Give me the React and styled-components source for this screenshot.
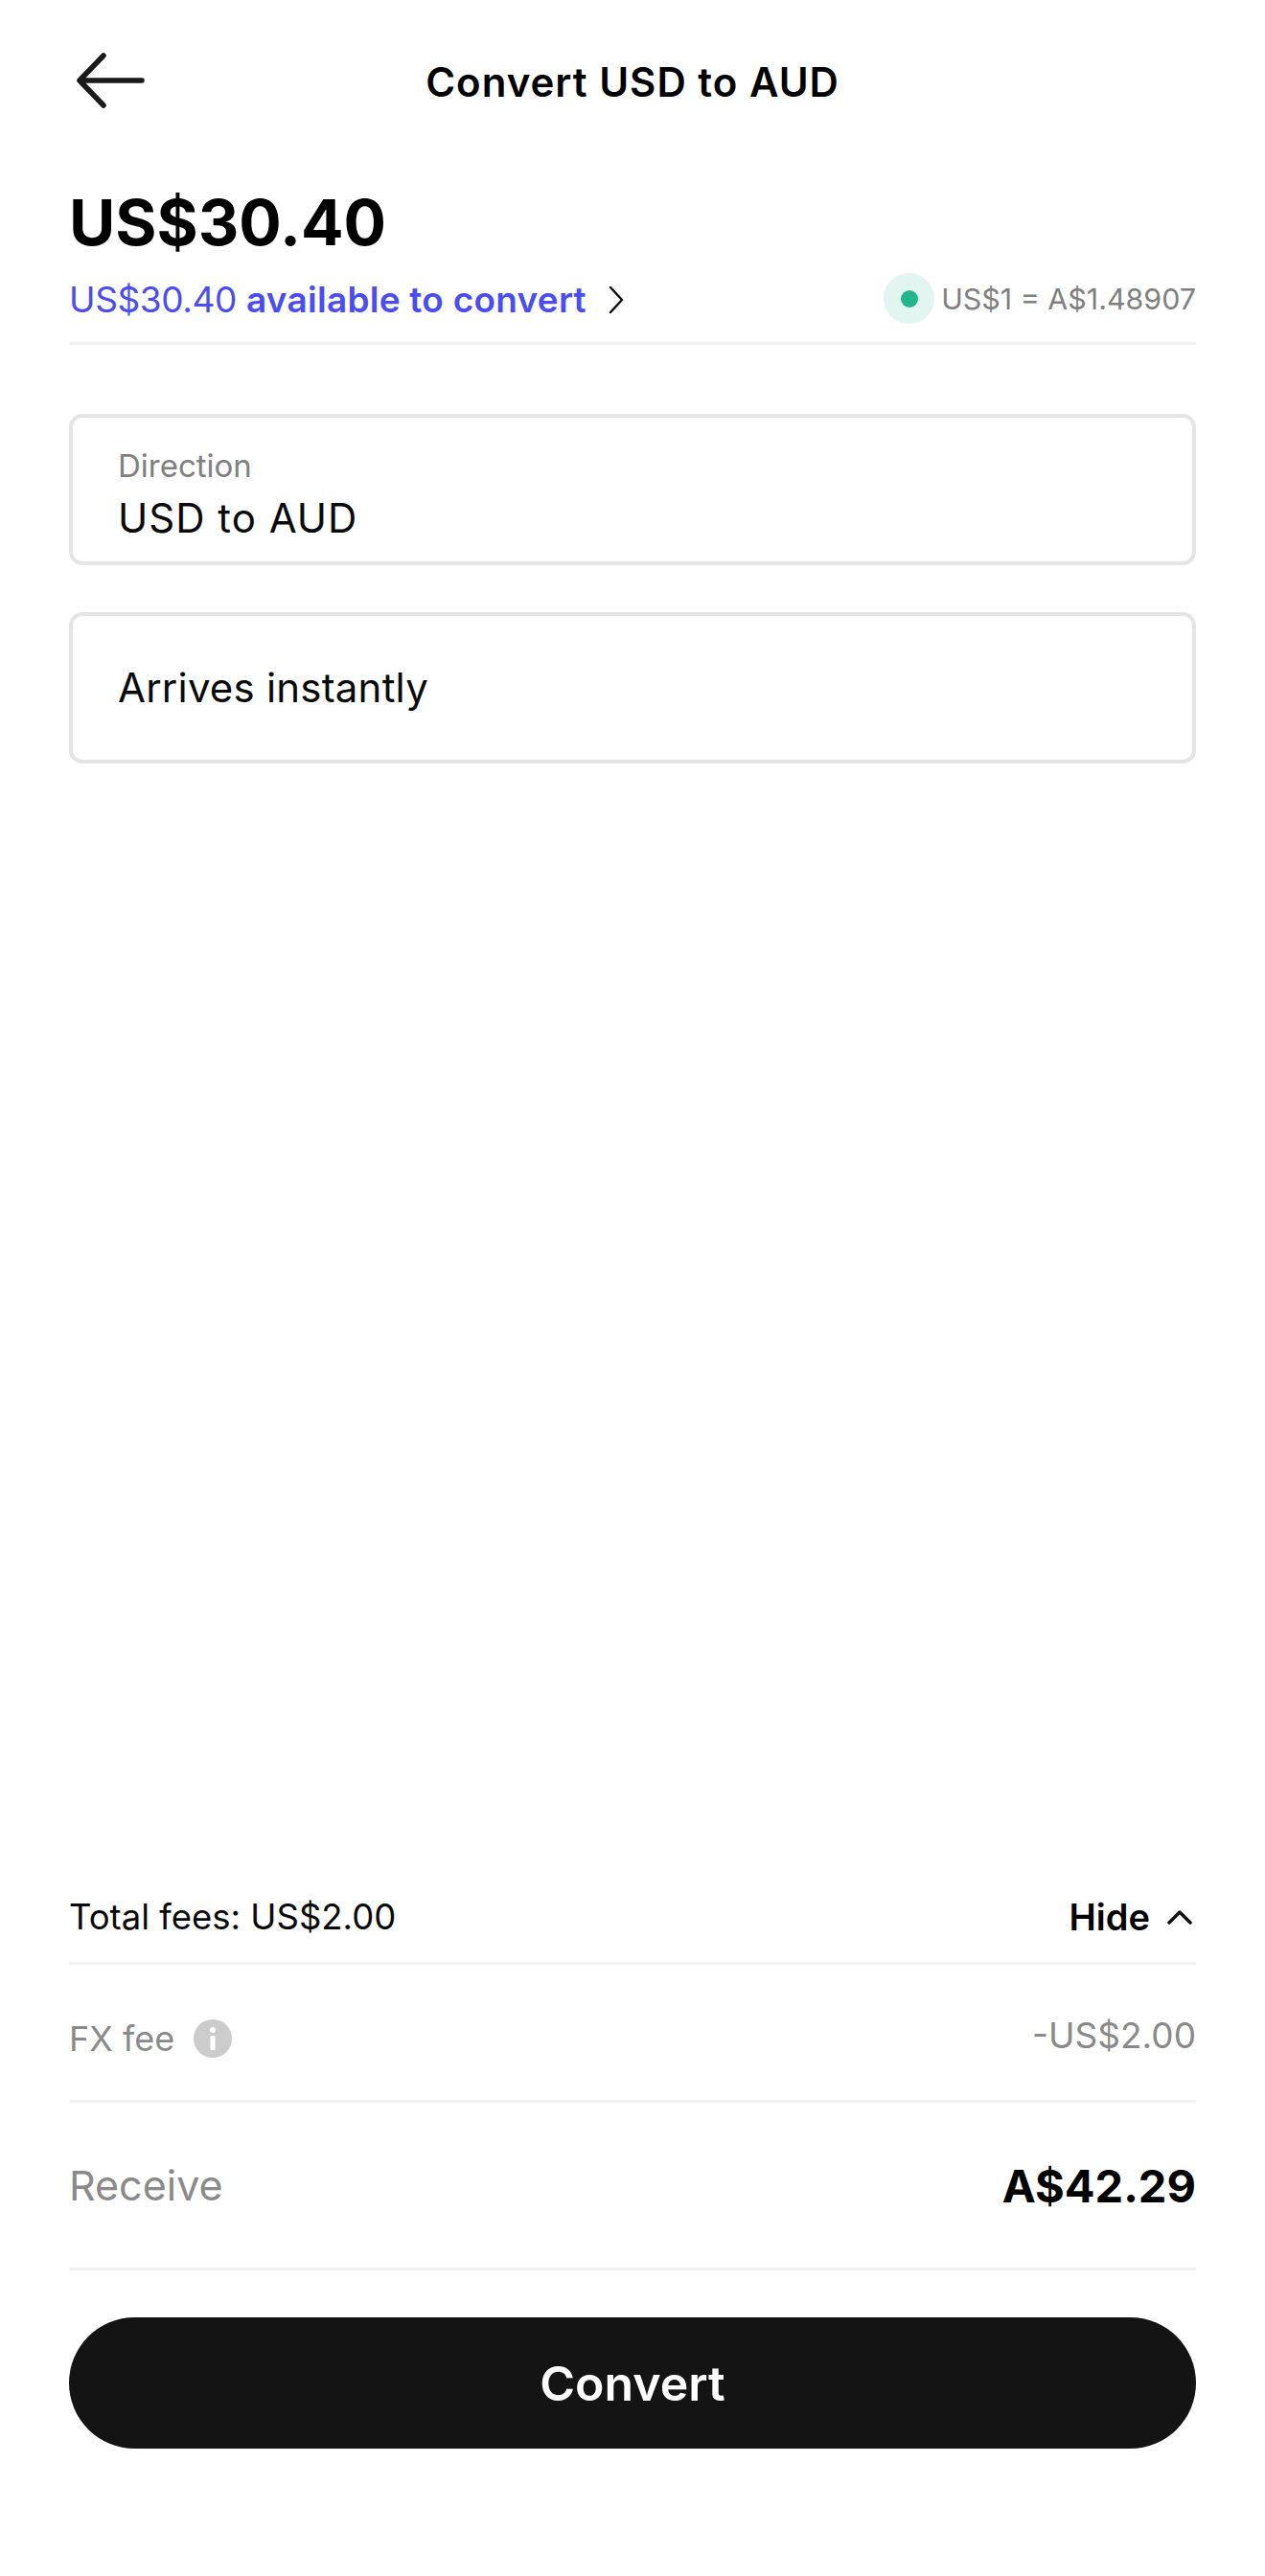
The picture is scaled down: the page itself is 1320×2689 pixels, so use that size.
import React from 'react';
import styled, { createGlobalStyle } from 'styled-components';

const GlobalStyle = createGlobalStyle`
  html, body {
    margin: 0;
    padding: 0;
    background: #fff;
    font-family: Inter, "Liberation Sans", sans-serif;
    color: #0a0a0a;
  }
  * { box-sizing: border-box; }
`;

const Page = styled.div`
  width: 1320px;
  height: 2689px;
  padding: 0 72px 133px;
  display: flex;
  flex-direction: column;
`;

/* ------------------------------- Header ------------------------------- */
const Header = styled.header`
  height: 170px;
  display: flex;
  align-items: center;
  justify-content: center;
  position: relative;
`;

const BackButton = styled.svg`
  position: absolute;
  left: 7px;
  top: 55px;
`;

const Title = styled.h1`
  margin: 0;
  font-size: 42px;
  font-weight: 600;
  letter-spacing: 1px;
  color: #000;
`;

/* ------------------------------- Balance ------------------------------ */
const Amount = styled.div`
  font-size: 66px;
  font-weight: 700;
  line-height: 84px;
  height: 84px;
  margin-top: 20px;
  color: #000;
`;

const BalanceRow = styled.div`
  height: 86px;
  padding-bottom: 6px;
  display: flex;
  align-items: center;
  justify-content: space-between;
  border-bottom: 3px solid #f2f2f2;
`;

const Available = styled.div`
  display: flex;
  align-items: center;
  font-size: 37px;
  letter-spacing: -0.4px;
  color: #4a4df0;
`;

const Strong = styled.span`
  font-weight: 600;
  margin-left: 10px;
  letter-spacing: 0.25px;
`;

const Chevron = styled.svg`
  margin-left: 22px;
`;

const Rate = styled.div`
  display: flex;
  align-items: center;
  gap: 7px;
  margin-bottom: 2px;
  font-size: 30.4px;
  color: #808080;
`;

const Halo = styled.span`
  width: 53px;
  height: 53px;
  border-radius: 50%;
  background: #e3f5f1;
  display: flex;
  align-items: center;
  justify-content: center;

  &::after {
    content: '';
    width: 18px;
    height: 18px;
    border-radius: 50%;
    background: #22b68e;
  }
`;

/* ------------------------------- Fields ------------------------------- */
const Fields = styled.div`
  margin-top: 72px;
  display: flex;
  flex-direction: column;
  gap: 49px;
`;

const Field = styled.div`
  height: 158px;
  padding: 0 47px;
  border: 4px solid #e5e5e5;
  border-radius: 14px;
  display: flex;
  flex-direction: column;
  justify-content: center;
`;

const FieldLabel = styled.div`
  font-size: 33px;
  line-height: 40px;
  margin-top: 11px;
  color: #808080;
`;

const FieldValue = styled.div`
  font-size: 42px;
  line-height: 54px;
  letter-spacing: ${(p) => p.$tracking || 0.2}px;
  color: #0a0a0a;
  margin-top: ${(p) => p.$offset || 0}px;
`;

const Spacer = styled.div`
  flex: 1;
`;

/* -------------------------------- Fees -------------------------------- */
const FeeRow = styled.div`
  height: ${(p) => p.$height}px;
  padding-top: ${(p) => p.$top || 0}px;
  padding-bottom: ${(p) => p.$bottom || 0}px;
  display: flex;
  align-items: center;
  justify-content: space-between;
  border-bottom: 3px solid #f2f2f2;
`;

const FeeTotal = styled.div`
  font-size: 36.5px;
  color: #0a0a0a;
`;

const HideToggle = styled.div`
  display: flex;
  align-items: center;
  gap: 18px;
  padding-right: 4px;
  font-size: 38px;
  font-weight: 600;
  color: #000;
`;

const Muted = styled.div`
  display: flex;
  align-items: center;
  gap: 20px;
  font-size: ${(p) => p.$size || 36}px;
  color: #8a8a8a;
  margin-bottom: ${(p) => p.$lift || 0}px;
`;

const Received = styled.div`
  font-size: 47px;
  font-weight: 700;
  color: #000;
`;

const ConvertButton = styled.button`
  margin-top: 49px;
  height: 137px;
  width: 100%;
  border: 0;
  border-radius: 69px;
  background: #141414;
  color: #fff;
  font-family: inherit;
  font-size: 50px;
  font-weight: 600;
`;

const InfoIcon = () => (
  <svg width="40" height="40" viewBox="0 0 40 40">
    <circle cx="20" cy="20" r="20" fill="#cccccc" />
    <circle cx="20" cy="11" r="3" fill="#fff" />
    <rect x="17.5" y="17" width="5" height="15" rx="1.5" fill="#fff" />
  </svg>
);

const App = () => {
  return (
    <Page>
      <GlobalStyle />
      <Header>
        <BackButton width="74" height="58" viewBox="0 0 74 58" fill="none">
          <path
            d="M69 29H4M29 3 4 29l25 26"
            stroke="#1a1a1a"
            strokeWidth="5.5"
            strokeLinecap="round"
            strokeLinejoin="round"
          />
        </BackButton>
        <Title>Convert USD to AUD</Title>
      </Header>

      <Amount>US$30.40</Amount>
      <BalanceRow>
        <Available>
          US$30.40<Strong>available to convert</Strong>
          <Chevron width="18" height="30" viewBox="0 0 18 30" fill="none">
            <path d="M3 2l12 13L3 28" stroke="#111" strokeWidth="2.5" strokeLinecap="round" strokeLinejoin="round" />
          </Chevron>
        </Available>
        <Rate>
          <Halo />
          US$1 = A$1.48907
        </Rate>
      </BalanceRow>

      <Fields>
        <Field>
          <FieldLabel>Direction</FieldLabel>
          <FieldValue $offset={8} $tracking={1}>USD to AUD</FieldValue>
        </Field>
        <Field>
          <FieldValue>Arrives instantly</FieldValue>
        </Field>
      </Fields>

      <Spacer />

      <FeeRow $height={85} $bottom={13}>
        <FeeTotal>Total fees: US$2.00</FeeTotal>
        <HideToggle>
          Hide
          <svg width="26" height="16" viewBox="0 0 26 16" fill="none">
            <path d="M2 14 13 3l11 11" stroke="#111" strokeWidth="3.5" strokeLinecap="round" strokeLinejoin="round" />
          </svg>
        </HideToggle>
      </FeeRow>
      <FeeRow $height={144} $top={12}>
        <Muted>
          FX fee <InfoIcon />
        </Muted>
        <Muted $size={37} $lift={6}>-US$2.00</Muted>
      </FeeRow>
      <FeeRow $height={175}>
        <Muted $size={43}>Receive</Muted>
        <Received>A$42.29</Received>
      </FeeRow>

      <ConvertButton>Convert</ConvertButton>
    </Page>
  );
};

export default App;
